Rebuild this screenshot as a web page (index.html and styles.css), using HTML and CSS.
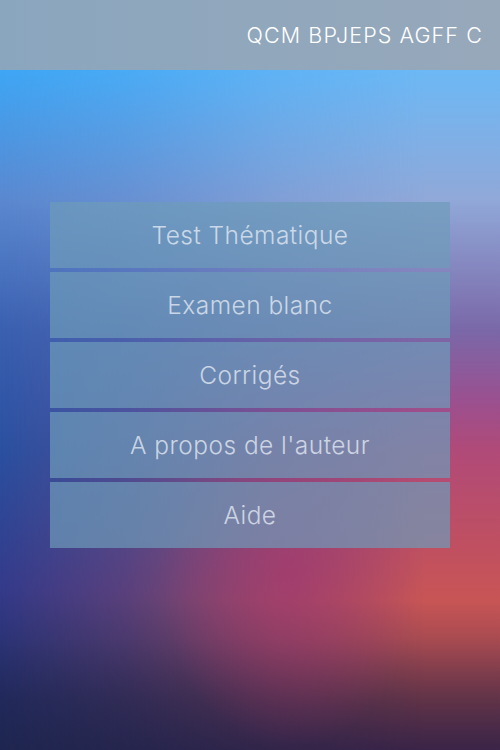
FILE: index.html
```html
<!DOCTYPE html>
<html lang="fr">
<head>
<meta charset="utf-8">
<title>QCM BPJEPS AGFF C</title>
<link rel="stylesheet" href="styles.css">
</head>
<body>
<div class="screen">
  <header class="topbar">
    <h1 class="title">QCM BPJEPS AGFF C</h1>
  </header>
  <nav class="menu">
    <a class="menu-item" href="#">Test Thématique</a>
    <a class="menu-item" href="#">Examen blanc</a>
    <a class="menu-item" href="#">Corrigés</a>
    <a class="menu-item" href="#">A propos de l'auteur</a>
    <a class="menu-item" href="#">Aide</a>
  </nav>
</div>
</body>
</html>
```
FILE: styles.css
```css
html, body {
  margin: 0;
  padding: 0;
}
body {
  width: 500px;
  height: 750px;
  overflow: hidden;
  font-family: Inter, "Liberation Sans", sans-serif;
}
.screen {
  position: relative;
  width: 500px;
  height: 750px;
  display: flex;
  flex-direction: column;
  background: linear-gradient(to bottom,
    #3ea6f5 0px, #3ea6f5 70px,
    #5a88d0 200px,
    #3a60b0 330px,
    #2a50a0 450px,
    #343a8a 590px,
    #222c60 700px,
    #1e2a55 750px);
}
.screen::before {
  content: "";
  position: absolute;
  inset: 0;
  background: linear-gradient(to bottom,
    #6cb8f5 0px, #6cb8f5 70px,
    #90a8d8 200px,
    #7a68a8 330px,
    #9a5090 400px,
    #b04a78 450px,
    #c05060 550px,
    #c85555 600px,
    #a04850 650px,
    #703848 700px,
    #4a2848 750px);
  -webkit-mask-image: linear-gradient(to right, rgba(0,0,0,0) 0%, rgba(0,0,0,0.25) 25%, rgba(0,0,0,0.7) 55%, #000 85%);
  mask-image: linear-gradient(to right, rgba(0,0,0,0) 0%, rgba(0,0,0,0.25) 25%, rgba(0,0,0,0.7) 55%, #000 85%);
}
.screen::after {
  content: "";
  position: absolute;
  inset: 0;
  background:
    radial-gradient(ellipse 130px 170px at 58% 77%, rgba(165, 50, 115, 0.55) 0%, rgba(165, 50, 115, 0) 100%),
    linear-gradient(to bottom, rgba(30, 30, 70, 0) 85%, rgba(30, 30, 70, 0.35) 100%);
}
.topbar {
  position: relative;
  z-index: 1;
  height: 70px;
  flex: none;
  display: flex;
  align-items: center;
  justify-content: flex-end;
  padding: 0 18px;
  background: linear-gradient(to right, #8aa6be, #97a8ba);
}
.title {
  margin: 0;
  font-weight: 300;
  font-size: 21.5px;
  letter-spacing: 1.1px;
  margin-right: -1px;
  color: #ffffff;
}
.menu {
  position: relative;
  z-index: 1;
  margin: 132px auto 0;
  width: 400px;
  display: flex;
  flex-direction: column;
  gap: 4px;
}
.menu-item {
  height: 66px;
  display: flex;
  align-items: center;
  justify-content: center;
  background: rgba(110, 155, 185, 0.7);
  color: rgba(225, 232, 242, 0.82);
  font-size: 24.5px;
  font-weight: 300;
  letter-spacing: 0.45px;
  text-decoration: none;
}
```
